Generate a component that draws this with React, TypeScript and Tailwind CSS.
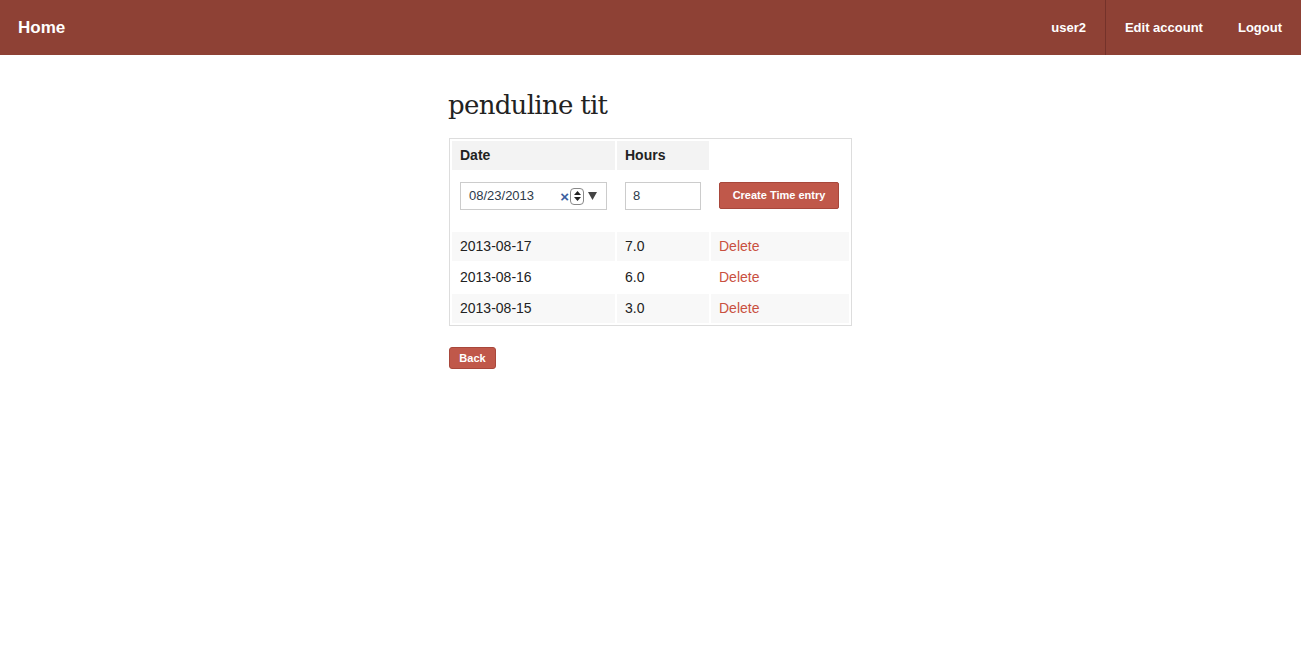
import React from 'react';

const entries = [
  { date: '2013-08-17', hours: '7.0' },
  { date: '2013-08-16', hours: '6.0' },
  { date: '2013-08-15', hours: '3.0' },
];

const sans = { fontFamily: '"Liberation Sans", Arial, sans-serif' };

export default function App() {
  return (
    <div className="min-h-[656px] bg-white text-[#222]" style={sans}>
      {/* top bar */}
      <div className="h-[55px] bg-[#8e4135] flex items-stretch justify-between text-white">
        <a className="flex items-center pl-[18px] text-[17px] font-bold">Home</a>
        <div className="flex items-stretch text-[13px] font-bold">
          <a className="flex items-center pr-[19px]">user2</a>
          <div className="w-px bg-[#74322a]" />
          <a className="flex items-center pl-[19px] pr-[35px]">Edit account</a>
          <a className="flex items-center pr-[19px]">Logout</a>
        </div>
      </div>

      <div className="w-[403px] mx-auto pt-[30px]">
        <h1 className="text-[26px] leading-[40px] text-[#222] mb-[13px] ml-[-1px]" style={{ fontFamily: '"DejaVu Serif", Georgia, serif', letterSpacing: '-0.7px' }}>
          penduline tit
        </h1>

        <table className="border border-[#dddddd] border-separate border-spacing-[2px] text-[14px]">
          <thead>
            <tr>
              <th className="w-[163px] h-[29px] bg-[#f3f3f3] text-left font-bold px-[8px]">Date</th>
              <th className="w-[92px] h-[29px] bg-[#f3f3f3] text-left font-bold px-[8px]">Hours</th>
              <th className="w-[138px]" />
            </tr>
          </thead>
          <tbody>
            <tr>
              <td className="h-[58px] px-[8px] align-top pt-[10px]">
                <div className="w-[147px] h-[28px] border border-[#cccccc] flex items-center pl-[8px] pr-[9px] text-[13px] text-[#2d3a4a]">
                  <span className="flex-1">08/23/2013</span>
                  <span className="text-[#3b5fa0] text-[15px] font-bold leading-none mr-[1px]">×</span>
                  <span className="w-[14px] h-[17px] border border-[#888] rounded-[4px] flex flex-col items-center justify-center gap-[2px] mr-[4px]">
                    <svg width="7" height="4" viewBox="0 0 7 4"><path d="M0 4 L3.5 0 L7 4Z" fill="#222" /></svg>
                    <svg width="7" height="4" viewBox="0 0 7 4"><path d="M0 0 L3.5 4 L7 0Z" fill="#222" /></svg>
                  </span>
                  <svg width="9" height="8" viewBox="0 0 9 8"><path d="M0 0 L9 0 L4.5 8Z" fill="#444" /></svg>
                </div>
              </td>
              <td className="px-[8px] align-top pt-[10px]">
                <div className="w-[76px] h-[28px] border border-[#cccccc] flex items-center pl-[7px] text-[13px] text-[#2d3a4a]">8</div>
              </td>
              <td className="px-[8px] align-top pt-[10px]">
                <button className="w-[120px] h-[27px] bg-[#c0584a] border border-[#a8473b] rounded-[2px] text-white text-[11px] font-bold">
                  Create Time entry
                </button>
              </td>
            </tr>
            {entries.map((e, i) => (
              <tr key={e.date}>
                <td className={`h-[29px] px-[8px] ${i % 2 === 0 ? 'bg-[#f8f8f8]' : ''}`}>{e.date}</td>
                <td className={`px-[8px] ${i % 2 === 0 ? 'bg-[#f8f8f8]' : ''}`}>{e.hours}</td>
                <td className={`px-[8px] text-[#c9503f] ${i % 2 === 0 ? 'bg-[#f8f8f8]' : ''}`}>Delete</td>
              </tr>
            ))}
          </tbody>
        </table>

        <button className="mt-[21px] w-[47px] h-[22px] bg-[#c0584a] border border-[#a8473b] rounded-[3px] text-white text-[11px] font-bold">
          Back
        </button>
      </div>
    </div>
  );
}
